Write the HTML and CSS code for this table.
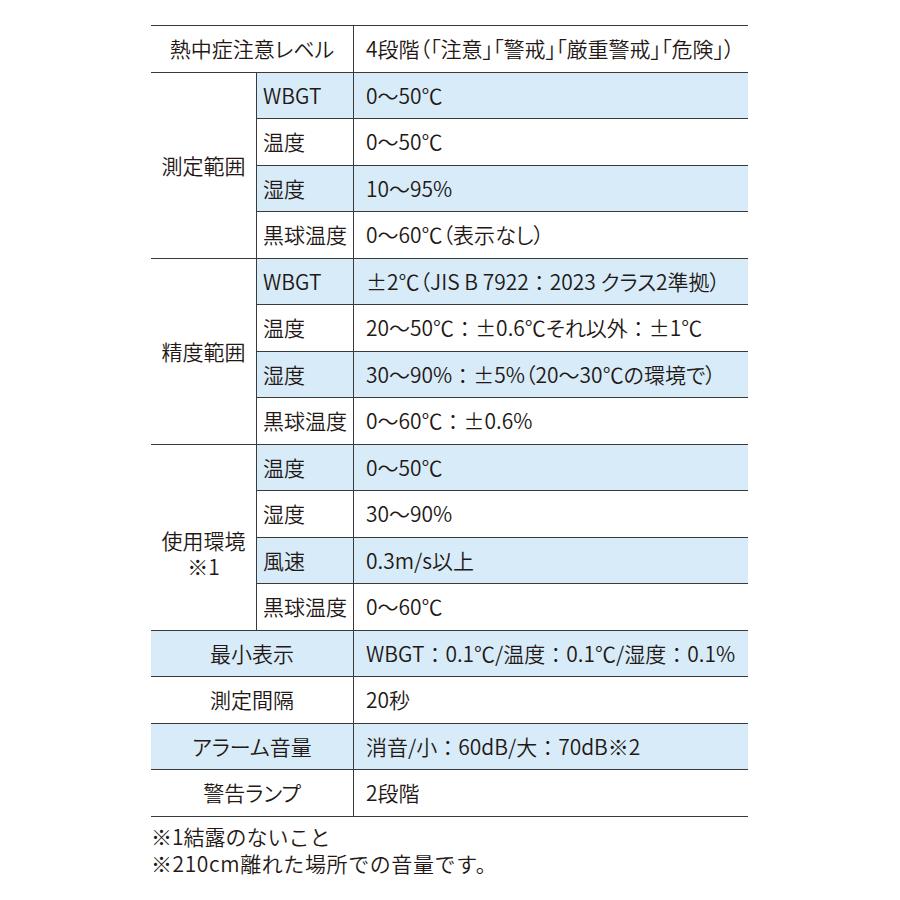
FILE: index.html
```html
<!DOCTYPE html>
<html lang="ja">
<head>
<meta charset="utf-8">
<link rel="stylesheet" href="styles.css">
</head>
<body>
<div class="page">
  <div class="spec">
    <div class="c head">熱中症注意レベル</div>
    <div class="c val">4段階（「注意」「警戒」「厳重警戒」「危険」）</div>

    <div class="c group g4">測定範囲</div>
    <div class="c sub blue">WBGT</div><div class="c val blue">0～50℃</div>
    <div class="c sub">温度</div><div class="c val">0～50℃</div>
    <div class="c sub blue">湿度</div><div class="c val blue">10～95%</div>
    <div class="c sub">黒球温度</div><div class="c val">0～60℃（表示なし）</div>

    <div class="c group g4">精度範囲</div>
    <div class="c sub blue">WBGT</div><div class="c val blue">±2℃（JIS B 7922<span class="sep">：</span>2023 クラス2準拠）</div>
    <div class="c sub">温度</div><div class="c val">20～50℃<span class="sep">：</span>±0.6℃それ以外<span class="sep">：</span>±1℃</div>
    <div class="c sub blue">湿度</div><div class="c val blue">30～90%<span class="sep">：</span>±5%（20～30℃の環境で）</div>
    <div class="c sub">黒球温度</div><div class="c val">0～60℃<span class="sep">：</span>±0.6%</div>

    <div class="c group g4 env"><span>使用環境</span><span>※1</span></div>
    <div class="c sub blue">温度</div><div class="c val blue">0～50℃</div>
    <div class="c sub">湿度</div><div class="c val">30～90%</div>
    <div class="c sub blue">風速</div><div class="c val blue">0.3m/s以上</div>
    <div class="c sub">黒球温度</div><div class="c val">0～60℃</div>

    <div class="c head blue">最小表示</div>
    <div class="c val blue">WBGT<span class="sep">：</span>0.1℃/温度<span class="sep">：</span>0.1℃/湿度<span class="sep">：</span>0.1%</div>
    <div class="c head">測定間隔</div>
    <div class="c val">20秒</div>
    <div class="c head blue">アラーム音量</div>
    <div class="c val blue">消音/小<span class="sep">：</span>60dB/大<span class="sep">：</span>70dB※2</div>
    <div class="c head">警告ランプ</div>
    <div class="c val">2段階</div>
  </div>
  <div class="notes">
    <p>※1結露のないこと</p>
    <p class="wide">※210cm離れた場所での音量です。</p>
  </div>
</div>
</body>
</html>
```

FILE: styles.css
```css
html, body {
  margin: 0;
  padding: 0;
  background: #ffffff;
}
body {
  font-family: "Noto Sans CJK JP", "Noto Sans", sans-serif;
  font-weight: 350;
  font-feature-settings: "palt";
  color: #231815;
  font-size: 21px;
}
.page {
  width: 597px;
  margin: 25px 0 0 151px;
}
.spec {
  display: grid;
  grid-template-columns: 106px 97px 394px;
  grid-auto-rows: 46.5px;
  border-top: 1.5px solid #3a3a3a;
}
.c {
  box-sizing: border-box;
  border-bottom: 1.5px solid #3a3a3a;
  display: flex;
  align-items: center;
  white-space: nowrap;
  line-height: 1;
}
.sep {
  font-feature-settings: normal;
}
.head {
  grid-column: 1 / 3;
  justify-content: center;
  border-right: 1.3px solid #3a3a3a;
}
.group {
  grid-column: 1;
  justify-content: center;
  border-right: 1.3px solid #3a3a3a;
}
.g4 { grid-row: span 4; }
.env {
  flex-direction: column;
  line-height: 26px;
  padding-top: 32px;
}
.sub {
  grid-column: 2;
  padding-left: 6px;
  border-right: 1.3px solid #3a3a3a;
}
.val {
  grid-column: 3;
  padding-left: 12px;
}
.blue { background: #d7ebf8; }
.notes {
  padding-top: 6px;
  font-feature-settings: normal;
}
.notes p {
  margin: 0;
  line-height: 27px;
  font-size: 21px;
}
.notes .wide {
  letter-spacing: 0.6px;
}
```
